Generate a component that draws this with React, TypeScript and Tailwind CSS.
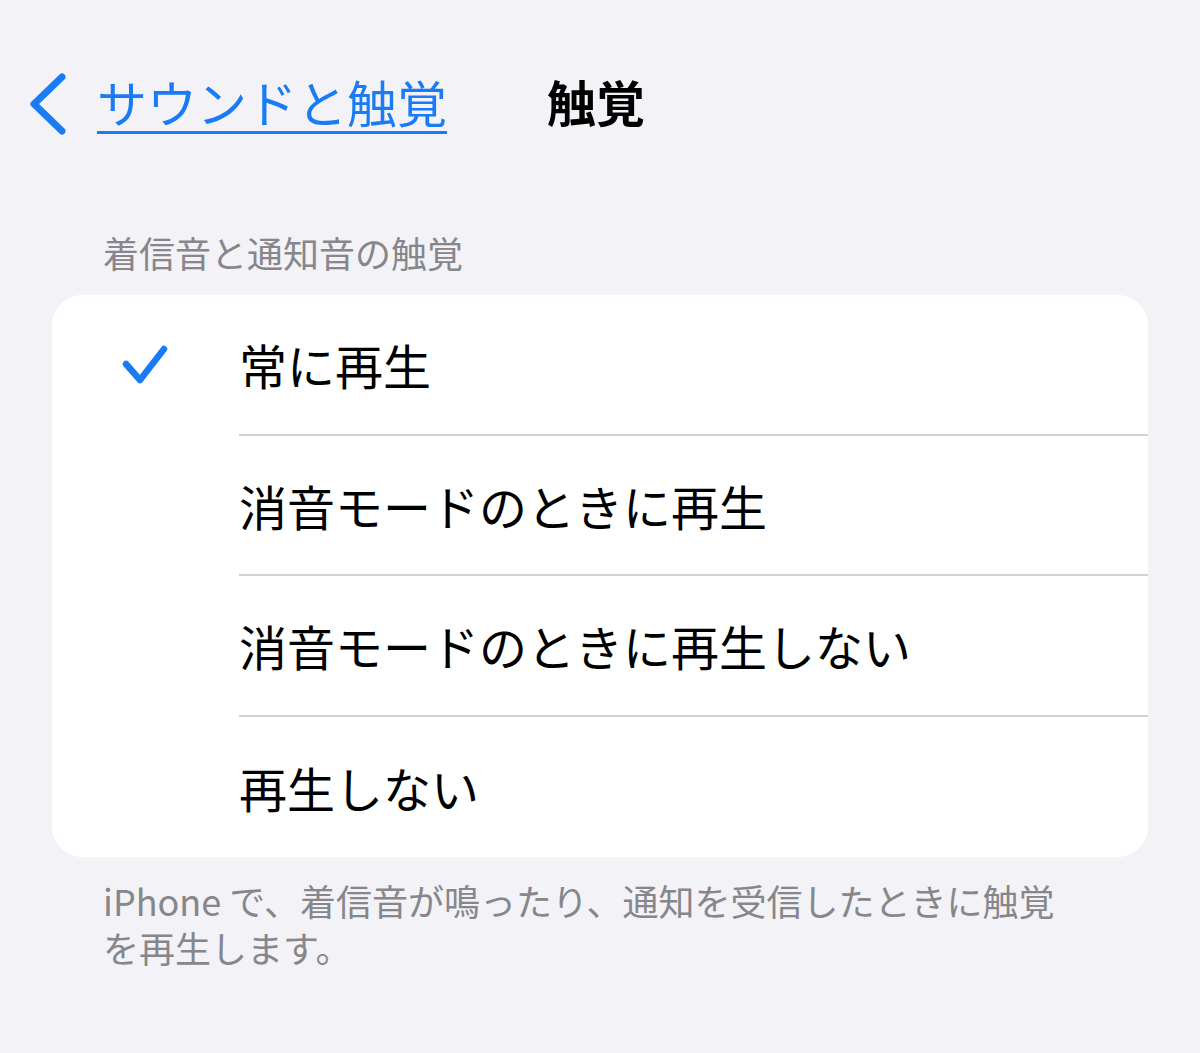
import React from "react";

const options = [
  "常に再生",
  "消音モードのときに再生",
  "消音モードのときに再生しない",
  "再生しない",
];

function Check() {
  return (
    <svg width="46" height="42" viewBox="0 0 46 42" fill="none">
      <path
        d="M4 20 L18 36 L42 5"
        stroke="#1a7cf5"
        strokeWidth="6.5"
        strokeLinecap="round"
        strokeLinejoin="round"
      />
    </svg>
  );
}

function BackChevron() {
  return (
    <svg width="40" height="62" viewBox="0 0 40 62" fill="none">
      <path
        d="M34 4 L6 31 L34 58"
        stroke="#1a7cf5"
        strokeWidth="7"
        strokeLinecap="round"
        strokeLinejoin="round"
      />
    </svg>
  );
}

export default function App() {
  const selected = 0;

  return (
    <div
      className="w-[1200px] h-[1053px] bg-[#f2f2f7] overflow-hidden"
      style={{ fontFamily: '"Noto Sans CJK JP", "Noto Sans", sans-serif' }}
    >
      <header className="flex items-center h-[62px] mt-[73px] pl-[28px]">
        <button className="flex items-center">
          <BackChevron />
          <span className="ml-[29px] pb-[7px] text-[50px] leading-none text-[#1a7cf5] underline decoration-[3px] underline-offset-[8px]">
            サウンドと触覚
          </span>
        </button>
        <h1 className="ml-[100px] pb-[7px] text-[49px] leading-none font-bold text-black">
          触覚
        </h1>
      </header>

      <p className="mt-[99px] mb-[25px] pl-[103px] text-[36px] leading-[36px] text-[#86868b]">
        着信音と通知音の触覚
      </p>

      <ul className="mx-[52px] bg-white rounded-[30px] overflow-hidden">
        {options.map((label, i) => (
          <li key={label} className="flex items-stretch h-[140.5px]">
            <div className="w-[187px] shrink-0 flex items-center pl-[70px]">
              {i === selected && <Check />}
            </div>
            <div
              className={`flex-1 flex items-center text-[48px] leading-none text-black ${
                i < options.length - 1 ? "border-b-2 border-[#d1d1d6]" : ""
              }`}
            >
              {label}
            </div>
          </li>
        ))}
      </ul>

      <p className="mt-[20px] pl-[103px] w-[1075px] text-[36px] leading-[47px] text-[#86868b]">
        iPhone で、着信音が鳴ったり、通知を受信したときに触覚を再生します。
      </p>
    </div>
  );
}
